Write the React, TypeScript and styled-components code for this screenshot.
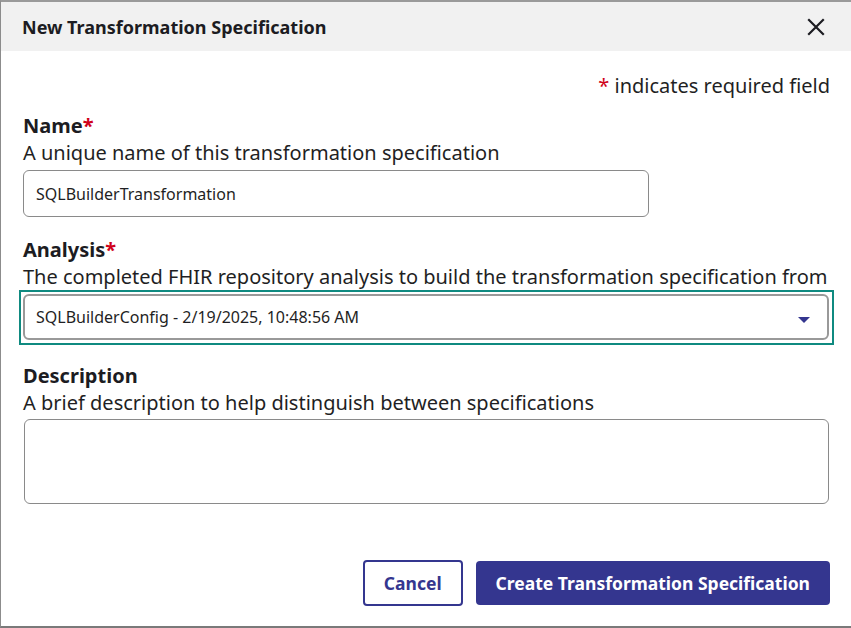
import React from "react";
import styled, { createGlobalStyle } from "styled-components";

const Global = createGlobalStyle`
  html, body { margin: 0; padding: 0; background: #ffffff; }
  body { font-family: "Noto Sans", "Open Sans", sans-serif; color: #1f1f24; }
  * { box-sizing: border-box; }
`;

const Dialog = styled.div`
  width: 851px;
  height: 628px;
  border-top: 2px solid #9a9a9a;
  border-left: 1px solid #8c8c8c;
  border-bottom: 2px solid #7a7a7a;
  background: #ffffff;
  display: flex;
  flex-direction: column;
`;

const Header = styled.div`
  height: 49px;
  background: #f1f1f1;
  display: flex;
  align-items: center;
  justify-content: space-between;
  padding: 0 26px 0 21px;
`;

const Title = styled.h2`
  margin: 0;
  font-size: 18px;
  font-weight: 700;
  color: #1c1c22;
  line-height: 24px;
`;

const CloseButton = styled.button`
  border: none;
  background: transparent;
  padding: 0;
  width: 18px;
  height: 18px;
  display: flex;
  align-items: center;
  justify-content: center;
  cursor: pointer;
`;

const Body = styled.div`
  flex: 1;
  display: flex;
  flex-direction: column;
  padding: 22px 21px 20px 22px;
`;

const RequiredNote = styled.div`
  text-align: right;
  font-size: 20px;
  line-height: 26px;
  color: #1f1f24;
  margin-bottom: 14px;
`;

const Star = styled.span`
  color: #d0021b;
`;

const Field = styled.div<{ $gap?: number }>`
  display: flex;
  flex-direction: column;
  margin-bottom: ${(p) => p.$gap ?? 0}px;
`;

const Label = styled.label`
  font-size: 20px;
  font-weight: 700;
  line-height: 26px;
  color: #1c1c22;
`;

const Help = styled.div`
  font-size: 20px;
  line-height: 27px;
  color: #1f1f24;
  white-space: nowrap;
`;

const TextInput = styled.div<{ $width?: string }>`
  margin-top: 4px;
  width: ${(p) => p.$width ?? "100%"};
  height: 47px;
  border: 1px solid #8a8a8a;
  border-radius: 6px;
  display: flex;
  align-items: center;
  padding: 0 12px;
  font-size: 16px;
  color: #1f1f24;
`;

const FocusRing = styled.div`
  margin-left: -4px;
  width: 815px;
  border: 2.5px solid #0f8a80;
  padding: 2px 3px 3px 2px;
`;

const SelectBox = styled.div`
  height: 46px;
  border: 2px solid #999999;
  border-radius: 6px;
  display: flex;
  align-items: center;
  justify-content: space-between;
  padding: 0 17px 0 11px;
  font-size: 16px;
  color: #1f1f24;
`;

const Caret = styled.span`
  width: 0;
  height: 0;
  border-left: 6px solid transparent;
  border-right: 6px solid transparent;
  border-top: 6px solid #34368f;
  margin-top: 6px;
`;

const TextArea = styled.div`
  margin-top: 3px;
  margin-left: 1px;
  width: 805px;
  height: 85px;
  border: 1px solid #8a8a8a;
  border-radius: 6px;
`;

const Actions = styled.div`
  margin-top: auto;
  display: flex;
  justify-content: flex-end;
  align-items: center;
  gap: 13px;
`;

const Button = styled.button<{ $primary?: boolean }>`
  height: ${(p) => (p.$primary ? 44 : 46)}px;
  border-radius: 4px;
  font-family: "Noto Sans", "Open Sans", sans-serif;
  font-size: 17.5px;
  font-weight: 700;
  padding: 0 ${(p) => (p.$primary ? 20 : 19)}px;
  cursor: pointer;
  border: ${(p) => (p.$primary ? "none" : "2px solid #34368f")};
  background: ${(p) => (p.$primary ? "#34368f" : "#ffffff")};
  color: ${(p) => (p.$primary ? "#ffffff" : "#34368f")};
`;

export default function App() {
  return (
    <>
      <Global />
      <Dialog>
        <Header>
          <Title>New Transformation Specification</Title>
          <CloseButton aria-label="Close">
            <svg width="18" height="18" viewBox="0 0 18 18">
              <path d="M2 2 L16 16 M16 2 L2 16" stroke="#1c1c22" strokeWidth="2.2" strokeLinecap="square" />
            </svg>
          </CloseButton>
        </Header>
        <Body>
          <RequiredNote>
            <Star>*</Star> indicates required field
          </RequiredNote>
          <Field $gap={20}>
            <Label>
              Name<Star>*</Star>
            </Label>
            <Help>A unique name of this transformation specification</Help>
            <TextInput $width="626px">SQLBuilderTransformation</TextInput>
          </Field>
          <Field $gap={18}>
            <Label>
              Analysis<Star>*</Star>
            </Label>
            <Help>The completed FHIR repository analysis to build the transformation specification from</Help>
            <FocusRing>
              <SelectBox>
                <span>SQLBuilderConfig - 2/19/2025, 10:48:56 AM</span>
                <Caret />
              </SelectBox>
            </FocusRing>
          </Field>
          <Field>
            <Label>Description</Label>
            <Help>A brief description to help distinguish between specifications</Help>
            <TextArea />
          </Field>
          <Actions>
            <Button>Cancel</Button>
            <Button $primary>Create Transformation Specification</Button>
          </Actions>
        </Body>
      </Dialog>
    </>
  );
}
